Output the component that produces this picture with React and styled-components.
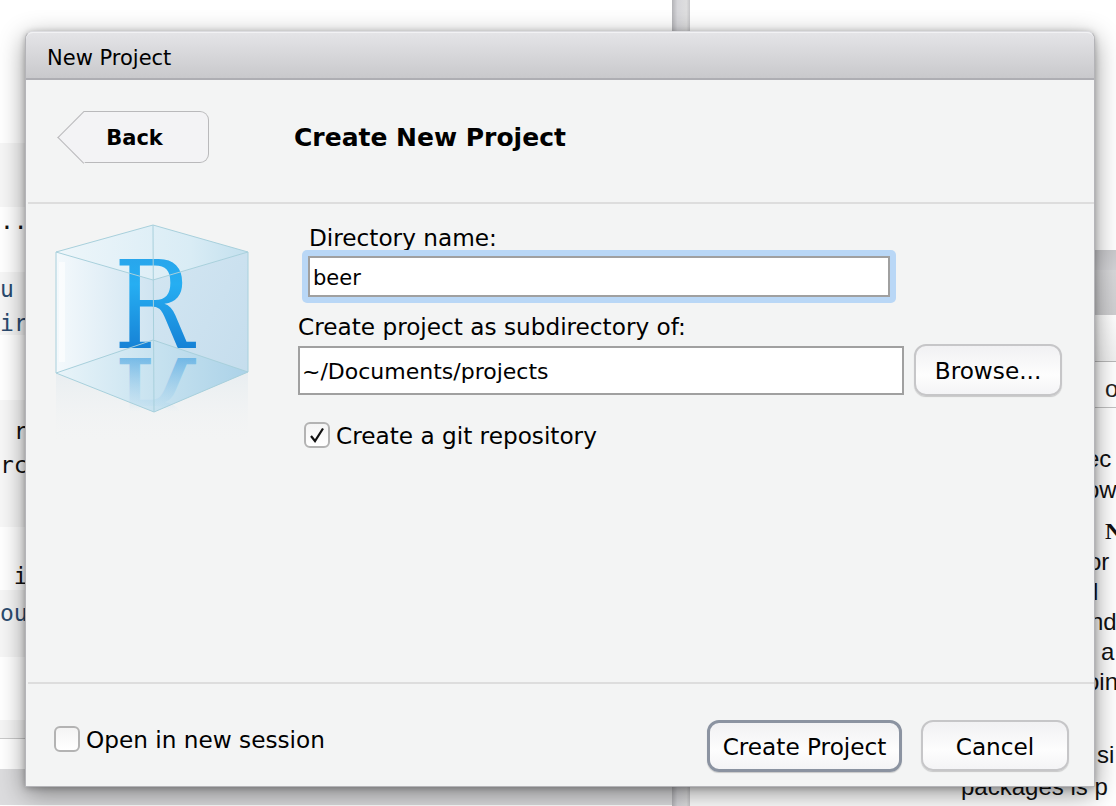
import React from 'react'
import styled, { createGlobalStyle } from 'styled-components'

const uiFont = `"DejaVu Sans", "Noto Sans", sans-serif`

const GlobalStyle = createGlobalStyle`
  html, body { margin: 0; padding: 0; height: 100%; background: #fff; overflow: hidden; }
  #root { height: 100%; }
`

const Desktop = styled.div`
  position: relative;
  width: 1116px;
  height: 806px;
  display: flex;
  overflow: hidden;
  background: #fff;
`

/* the RStudio panes behind the dialog */
const LeftPane = styled.div`
  width: 672px;
  display: flex;
  flex-direction: column;
`
const CodeRow = styled.div`
  height: ${p => p.$h}px;
  box-sizing: border-box;
  padding-top: ${p => p.$top || 0}px;
  background: ${p => p.$bg || '#fff'};
  border-bottom: ${p => (p.$line ? '1px solid #c9c9c9' : 'none')};
`
const CodeLine = styled.div`
  font-family: "DejaVu Sans Mono", monospace;
  font-size: 23px;
  line-height: ${p => p.$lh || 34}px;
  white-space: pre;
  color: ${p => p.$color || '#111'};
`
const Splitter = styled.div`
  width: 18px;
  background: linear-gradient(90deg, #b3b3b7, #d6d6da 30%, #dededf 80%, #c6c6c9);
`
const RightPane = styled.div`
  width: 426px;
  display: flex;
  flex-direction: column;
`
const PaneGap = styled.div`
  height: 250px;
`
const PaneTopBar = styled.div`
  height: 20px;
  background: linear-gradient(#c9c9cc, #d3d3d6);
`
const PaneTabs = styled.div`
  height: 45px;
  box-sizing: border-box;
  border-left: 1px solid #bbb;
  background: linear-gradient(#d8d8da, #cfcfd1);
`
const PaneTabFill = styled.div`
  height: 46px;
  background: linear-gradient(#fff, #f0f0f0);
  border-bottom: 1px solid #b9b9b9;
`
const PaneToolbar = styled.div`
  height: 46px;
  box-sizing: border-box;
  padding-left: 415px;
  border-bottom: 1px solid #c2c2c2;
  font: 24px/54px "Liberation Sans", Arial, sans-serif;
  color: #222;
`
const DocLine = styled.div`
  height: 30px;
  margin-top: ${p => p.$gap || 0}px;
  padding-left: ${p => p.$indent}px;
  font-family: ${p => (p.$code ? `"Liberation Serif", serif` : `"Liberation Sans", Arial, sans-serif`)};
  font-weight: ${p => (p.$code ? 700 : 400)};
  font-size: 24px;
  line-height: 30px;
  white-space: pre;
  color: #111;
`

/* dialog window */
const Dialog = styled.div`
  position: absolute;
  left: 25px;
  top: 31px;
  width: 1070px;
  height: 756px;
  box-sizing: border-box;
  display: flex;
  flex-direction: column;
  border-radius: 8px 8px 0 0;
  border: 1px solid #b4b4b8;
  border-top-color: #dcdce0;
  background: #f3f4f4;
  box-shadow: 0 7px 26px rgba(0, 0, 0, 0.42), 0 1px 6px rgba(0, 0, 0, 0.25);
  font-family: ${uiFont};
  color: #000;
`
const TitleBar = styled.div`
  height: 48px;
  box-sizing: border-box;
  padding-left: 21px;
  border-radius: 7px 7px 0 0;
  border-top: 1px solid #f2f2f4;
  border-bottom: 2px solid #aeaeb3;
  background: linear-gradient(#e4e4e7, #c9c9cc);
  font-size: 21px;
  line-height: 51px;
`
const Header = styled.div`
  height: 122px;
  display: flex;
  align-items: center;
  padding: 0 0 9px 32px;
  box-sizing: border-box;
`
const BackButton = styled.button`
  position: relative;
  width: 126px;
  height: 52px;
  margin-left: 25px;
  padding: 2px 22px 0 0;
  box-sizing: border-box;
  border: 1px solid #b9b9bb;
  border-left: none;
  border-radius: 0 9px 9px 0;
  background: #f3f3f5;
  font: 700 21px ${uiFont};
  color: #000;
  &::before {
    content: '';
    position: absolute;
    left: -18px;
    top: 7px;
    width: 36px;
    height: 36px;
    transform: rotate(45deg);
    border-left: 1px solid #b9b9bb;
    border-bottom: 1px solid #b9b9bb;
    background: #f3f3f5;
    z-index: 0;
  }
`
const BackLabel = styled.span`
  position: relative;
  z-index: 1;
`
const HeaderTitle = styled.div`
  margin-left: 85px;
  padding-top: 2px;
  font-size: 25px;
  font-weight: 700;
`
const Divider = styled.div`
  height: 2px;
  margin-left: 2px;
  background: #dddddd;
`
const Body = styled.div`
  flex: 1;
  display: flex;
`
const LogoColumn = styled.div`
  width: 272px;
  padding: 16px 0 0 24px;
  box-sizing: border-box;
`
const FormColumn = styled.div`
  padding-top: 20px;
  display: flex;
  flex-direction: column;
  align-items: flex-start;
`
const FieldLabel = styled.div`
  font-size: 23.2px;
  line-height: 28px;
  margin-left: ${p => p.$indent || 0}px;
`
const TextField = styled.div`
  box-sizing: border-box;
  width: ${p => p.$w}px;
  height: ${p => p.$h}px;
  padding-left: ${p => p.$pad}px;
  padding-top: ${p => p.$nudge}px;
  border: 2px solid #a0a0a0;
  background: #fff;
  font-size: ${p => p.$size}px;
  line-height: ${p => p.$h - 4 - p.$nudge}px;
  white-space: nowrap;
`
const FocusRing = styled.div`
  margin: -2px 0 10px 4px;
  padding: 6px;
  border-radius: 5px;
  background: #b9d7f6;
`
const PathRow = styled.div`
  display: flex;
  align-items: center;
  gap: 10px;
  margin-top: 3px;
`
const PushButton = styled.button`
  box-sizing: border-box;
  width: ${p => p.$w}px;
  height: ${p => p.$h}px;
  padding: 1px 0 0;
  border-radius: 12px;
  border: ${p => (p.$primary ? '3px solid #8b93a1' : '2px solid #c6c6c8')};
  background: linear-gradient(#f1f1f3, #fdfdfd 60%, #f4f4f6);
  box-shadow: 0 1px 1px rgba(0, 0, 0, 0.18);
  font: 23.2px ${uiFont};
  color: #000;
`
const CheckRow = styled.div`
  display: flex;
  align-items: flex-start;
  gap: 6px;
  font-size: 23.2px;
  line-height: 26px;
  margin: ${p => p.$margin || 0};
`
const CheckText = styled.span`
  padding-top: 1px;
`
const CheckBox = styled.span`
  box-sizing: border-box;
  width: 26px;
  height: 26px;
  display: flex;
  align-items: center;
  justify-content: center;
  border: 2px solid #b3b3b3;
  border-radius: 6px;
  background: linear-gradient(#f4f4f4, #fff);
`
const Footer = styled.div`
  height: 102px;
  display: flex;
  align-items: flex-start;
  padding: 36px 25px 0 28px;
  box-sizing: border-box;
`
const FooterButtons = styled.div`
  margin-left: auto;
  display: flex;
  gap: 19px;
`

const RLogo = () => (
  <svg width="210" height="230" viewBox="50 220 210 230">
    <defs>
      <linearGradient id="leftFace" x1="0" x2="1" y1="0" y2="0">
        <stop offset="0" stopColor="#f4f9fc" />
        <stop offset="1" stopColor="#cfe4f1" />
      </linearGradient>
      <linearGradient id="rightFace" x1="0" x2="1" y1="0" y2="1">
        <stop offset="0" stopColor="#d3e6f2" />
        <stop offset="1" stopColor="#c3dcec" />
      </linearGradient>
      <linearGradient id="topFace" x1="0" x2="1" y1="0" y2="0">
        <stop offset="0" stopColor="#eef6fa" />
        <stop offset="0.7" stopColor="#d9ecf5" />
        <stop offset="1" stopColor="#c3e0ee" />
      </linearGradient>
      <linearGradient id="floor" x1="0" x2="1" y1="0" y2="0">
        <stop offset="0" stopColor="#e9f4f9" />
        <stop offset="0.55" stopColor="#c5e1ef" />
        <stop offset="1" stopColor="#abd2e8" />
      </linearGradient>
      <linearGradient id="fade" x1="0" x2="0" y1="0" y2="1">
        <stop offset="0" stopColor="#dfe8ee" stopOpacity="0.55" />
        <stop offset="1" stopColor="#f3f4f4" stopOpacity="0" />
      </linearGradient>
      <linearGradient id="letter" x1="0" x2="0" y1="0" y2="1">
        <stop offset="0" stopColor="#2a9ee6" />
        <stop offset="0.35" stopColor="#26aef2" />
        <stop offset="1" stopColor="#0f6ec9" />
      </linearGradient>
      <linearGradient id="letterFlip" x1="0" x2="0" y1="0" y2="1">
        <stop offset="0.42" stopColor="#8fc6ea" stopOpacity="0" />
        <stop offset="0.85" stopColor="#3f9fe0" stopOpacity="0.75" />
      </linearGradient>
    </defs>
    {/* reflection under the cube */}
    <polygon points="56,373 154,412 248,372 248,445 56,445" fill="url(#fade)" />
    <polygon points="56,252 153,225 248,252 153,280" fill="url(#topFace)" />
    <polygon points="56,252 153,280 154,412 56,373" fill="url(#leftFace)" />
    <polygon points="153,280 248,252 248,372 154,412" fill="url(#rightFace)" />
    <polygon points="56,373 153,340 248,372 154,412" fill="url(#floor)" />
    <rect x="59" y="262" width="6" height="100" fill="#fff" opacity="0.6" />
    {/* R and its mirror image */}
    <text transform="matrix(.867 0 0 1 118 0)" x="-5" y="348" fontFamily="'DejaVu Serif', serif" fontSize="122" fill="url(#letter)">R</text>
    <text transform="matrix(.867 0 0 -1 118 706)" x="-5" y="348" fontFamily="'DejaVu Serif', serif" fontSize="122" fill="url(#letterFlip)">R</text>
    <g fill="none" stroke="#a8d0dc" strokeWidth="1">
      <polygon points="56,252 153,225 248,252 248,372 154,412 56,373" />
      <polyline points="56,252 153,280 248,252" />
      <polyline points="56,373 153,340 248,372" />
      <line x1="153" y1="225" x2="154" y2="412" />
    </g>
  </svg>
)

const Check = () => (
  <svg width="18" height="18" viewBox="0 0 18 18">
    <path d="M3 10 L7 15 L15 2.5" fill="none" stroke="#111" strokeWidth="2.2" />
  </svg>
)

const App = () => {
  return (
    <Desktop>
      <GlobalStyle />
      <LeftPane>
        <CodeRow $h={143} />
        <CodeRow $h={64} $bg="#f6f6f6" />
        <CodeRow $h={65}>
          <CodeLine $lh={28}>{'...'}</CodeLine>
        </CodeRow>
        <CodeRow $h={63} $bg="#f6f6f6">
          <CodeLine $color="#2b4a6e">u</CodeLine>
          <CodeLine $color="#2b4a6e">ir</CodeLine>
        </CodeRow>
        <CodeRow $h={65} />
        <CodeRow $h={127} $bg="#f7f7f7" $top={14}>
          <CodeLine>{' r'}</CodeLine>
          <CodeLine>rc</CodeLine>
        </CodeRow>
        <CodeRow $h={63} $top={32}>
          <CodeLine>{' i'}</CodeLine>
        </CodeRow>
        <CodeRow $h={67} $bg="#f6f6f6" $top={6}>
          <CodeLine $color="#2b4a6e">ou</CodeLine>
        </CodeRow>
        <CodeRow $h={63} />
        <CodeRow $h={19} $bg="#f5f5f5" $line />
        <CodeRow $h={30} />
        <CodeRow $h={36} $bg="#dcdcde" />
      </LeftPane>
      <Splitter />
      <RightPane>
        <PaneGap />
        <PaneTopBar />
        <PaneTabs />
        <PaneTabFill />
        <PaneToolbar>o</PaneToolbar>
        <DocLine $indent={396} $gap={36}>ec</DocLine>
        <DocLine $indent={396} $gap={1}>ow</DocLine>
        <DocLine $indent={415} $gap={11} $code>N</DocLine>
        <DocLine $indent={398} $gap={1}>or</DocLine>
        <DocLine $indent={403}>l</DocLine>
        <DocLine $indent={400}>nd</DocLine>
        <DocLine $indent={411}>a</DocLine>
        <DocLine $indent={396}>oin</DocLine>
        <DocLine $indent={407} $gap={43}>si</DocLine>
        <DocLine $indent={271} $gap={2}>packages is p</DocLine>
      </RightPane>

      <Dialog>
        <TitleBar>New Project</TitleBar>
        <Header>
          <BackButton>
            <BackLabel>Back</BackLabel>
          </BackButton>
          <HeaderTitle>Create New Project</HeaderTitle>
        </Header>
        <Divider />
        <Body>
          <LogoColumn>
            <RLogo />
          </LogoColumn>
          <FormColumn>
            <FieldLabel $indent={11}>Directory name:</FieldLabel>
            <FocusRing>
              <TextField $w={582} $h={41} $pad={3} $size={21} $nudge={4}>beer</TextField>
            </FocusRing>
            <FieldLabel>Create project as subdirectory of:</FieldLabel>
            <PathRow>
              <TextField $w={606} $h={49} $pad={2} $size={22} $nudge={3}>~/Documents/projects</TextField>
              <PushButton $w={148} $h={52}>Browse...</PushButton>
            </PathRow>
            <CheckRow $margin="26px 0 0 6px">
              <CheckBox><Check /></CheckBox>
              <CheckText>Create a git repository</CheckText>
            </CheckRow>
          </FormColumn>
        </Body>
        <Divider />
        <Footer>
          <CheckRow $margin="6px 0 0 0">
            <CheckBox />
            <CheckText>Open in new session</CheckText>
          </CheckRow>
          <FooterButtons>
            <PushButton $primary $w={195} $h={52}>Create Project</PushButton>
            <PushButton $w={148} $h={51}>Cancel</PushButton>
          </FooterButtons>
        </Footer>
      </Dialog>
    </Desktop>
  )
}

export default App
